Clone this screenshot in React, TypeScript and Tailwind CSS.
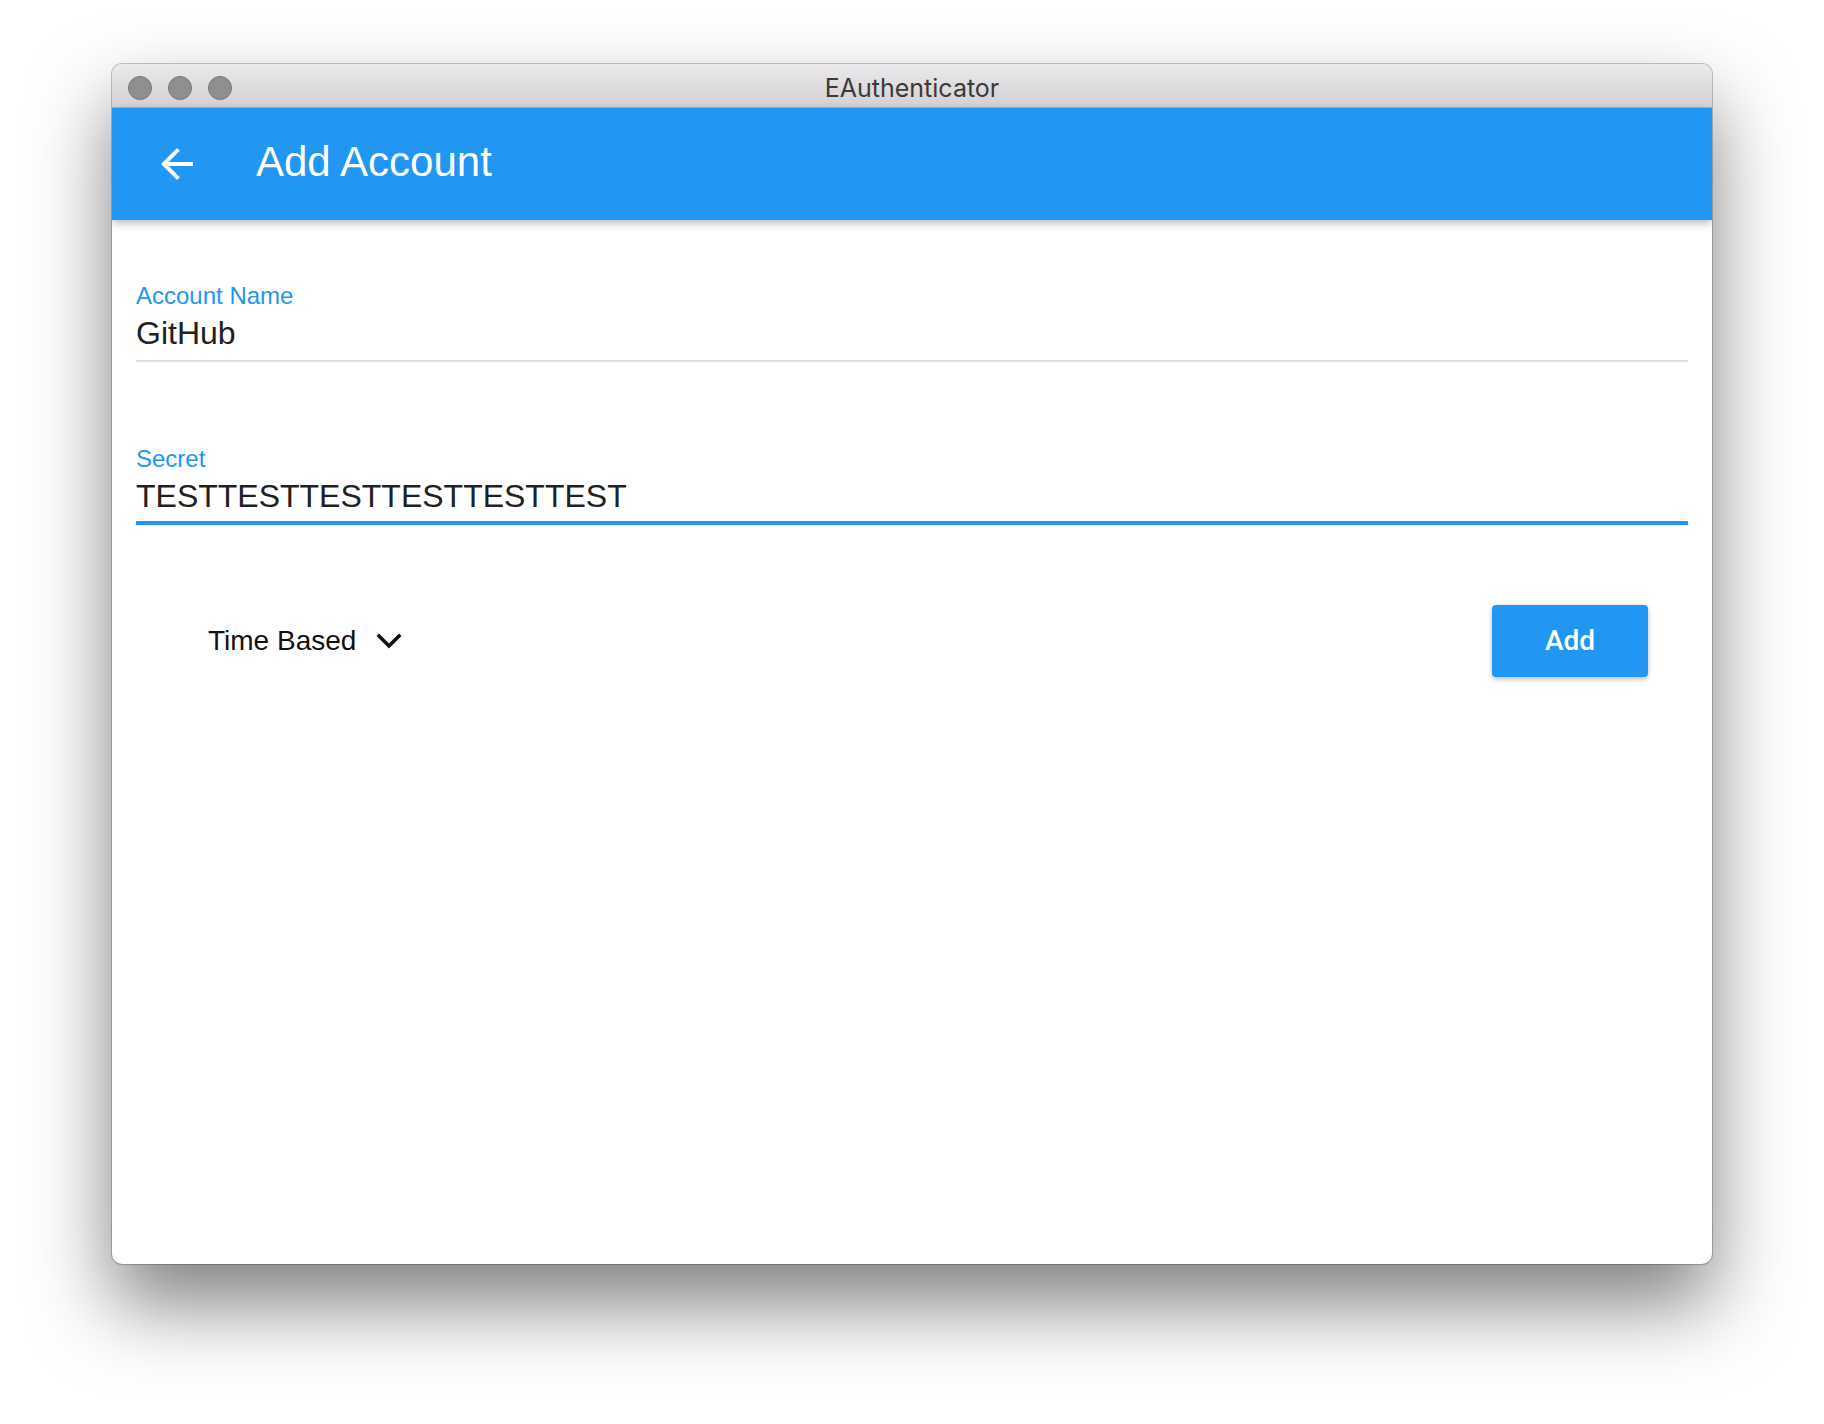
const ArrowBack = () => (
  <svg width="48" height="48" viewBox="0 0 24 24" fill="#ffffff">
    <path d="M20 11H7.83l5.59-5.59L12 4l-8 8 8 8 1.41-1.41L7.83 13H20v-2z" />
  </svg>
);

const ChevronDown = () => (
  <svg width="26" height="16" viewBox="0 0 26 16" fill="none">
    <polyline
      points="3,3 13,13 23,3"
      stroke="#111111"
      strokeWidth="3.6"
      strokeLinecap="square"
      strokeLinejoin="miter"
    />
  </svg>
);

const TrafficLight = () => (
  <div className="w-[24px] h-[24px] rounded-full bg-[#8f8e90] border border-[#767577]" />
);

const Field = ({
  label,
  value,
  focused,
}: {
  label: string;
  value: string;
  focused?: boolean;
}) => (
  <div className="flex flex-col">
    <div className="text-[24px] leading-[28px] text-[#2196f3]">{label}</div>
    <div
      className={
        focused
          ? "mt-[3px] text-[32px] leading-[40px] text-[#212121] pb-[5px] border-b-4 border-[#2196f3]"
          : "mt-[3px] text-[32px] leading-[40px] text-[#212121] pb-[7px] border-b-2 border-[#e0e0e0]"
      }
    >
      {value}
    </div>
  </div>
);

export default function App() {
  return (
    <div
      className="w-[1824px] h-[1424px] bg-white flex justify-center pt-[64px]"
      style={{ fontFamily: '"Liberation Sans", Arial, sans-serif' }}
    >
      <div className="w-[1600px] h-[1200px] bg-white rounded-[10px] overflow-hidden flex flex-col shadow-[0_40px_80px_rgba(0,0,0,0.5),0_0_0_1px_rgba(0,0,0,0.22)]">
        {/* title bar */}
        <div className="h-[44px] shrink-0 grid grid-cols-[1fr_auto_1fr] items-center pt-[4px] px-[16px] bg-gradient-to-b from-[#ebe9eb] to-[#d3d1d3] border-b border-[#b3b1b3]">
          <div className="flex items-center gap-[16px]">
            <TrafficLight />
            <TrafficLight />
            <TrafficLight />
          </div>
          <div
            className="text-[25px] leading-[30px] text-[#3a3a3a]"
            style={{ fontFamily: 'Inter, "Liberation Sans", sans-serif' }}
          >
            EAuthenticator
          </div>
          <div />
        </div>

        {/* app bar */}
        <div className="h-[112px] shrink-0 relative z-10 bg-[#2196f3] flex items-center pl-[41px] gap-[55px] shadow-[0_3px_8px_rgba(0,0,0,0.28)]">
          <ArrowBack />
          <div className="text-[42px] leading-[48px] text-white mb-[4px]">Add Account</div>
        </div>

        {/* form */}
        <div className="flex flex-col px-[24px] pt-[62px]">
          <Field label="Account Name" value="GitHub" />
          <div className="mt-[83px]">
            <Field label="Secret" value="TESTTESTTESTTESTTESTTEST" focused />
          </div>
          <div className="mt-[80px] h-[72px] flex items-center justify-between pl-[72px] pr-[40px]">
            <div className="flex items-center gap-[20px]">
              <span className="text-[28px] leading-[32px] text-[#111111]">Time Based</span>
              <ChevronDown />
            </div>
            <button
              className="w-[156px] h-[72px] rounded-[4px] bg-[#2196f3] text-white text-[28px] font-medium shadow-[0_2px_5px_rgba(0,0,0,0.28)]"
              style={{ fontFamily: 'Roboto, "Liberation Sans", sans-serif' }}
            >
              Add
            </button>
          </div>
        </div>
      </div>
    </div>
  );
}
